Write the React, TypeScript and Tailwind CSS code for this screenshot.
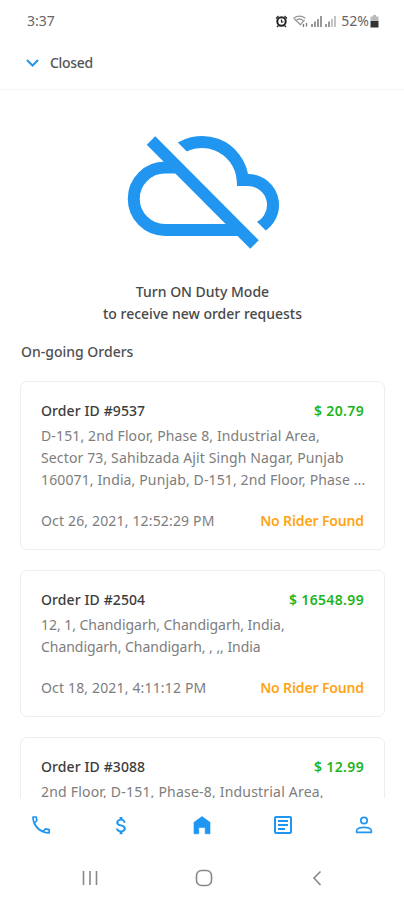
import { MdAttachMoney, MdOutlineArticle } from "react-icons/md";

type Order = {
	id: string;
	price: string;
	address: string[];
	addressClass: string;
	date?: string;
	status?: string;
};

const orders: Order[] = [
	{
		id: "9537",
		price: "$ 20.79",
		address: [
			"D-151, 2nd Floor, Phase 8, Industrial Area,",
			"Sector 73, Sahibzada Ajit Singh Nagar, Punjab",
			"160071, India, Punjab, D-151, 2nd Floor, Phase ..."
		],
		addressClass: "tracking-[0.13px]",
		date: "Oct 26, 2021, 12:52:29 PM",
		status: "No Rider Found"
	},
	{
		id: "2504",
		price: "$ 16548.99",
		address: [
			"12, 1, Chandigarh, Chandigarh, India,",
			"Chandigarh, Chandigarh, , ,, India"
		],
		addressClass: "tracking-[-0.04px]",
		date: "Oct 18, 2021, 4:11:12 PM",
		status: "No Rider Found"
	},
	{
		id: "3088",
		price: "$ 12.99",
		address: ["2nd Floor, D-151, Phase-8, Industrial Area,"],
		addressClass: "tracking-[0.2px]"
	}
];

const StatusBar = () => (
	<div className="flex h-[42px] shrink-0 items-center justify-between pl-[27px] pr-[25px] text-[14px] text-[#666]">
		<span>3:37</span>
		<div className="flex items-center">
			<svg className="mr-[5px]" width="13" height="13" viewBox="0 0 13 13" fill="none" stroke="#222">
				<circle cx="6.5" cy="6.5" r="4.2" strokeWidth="2" />
				<path d="M1 3.5 3.5 1M12 3.5 9.5 1M2 12l1.5-1.5M11 12l-1.5-1.5M6.5 4.5v2.5h2" strokeWidth="1.2" />
			</svg>
			<svg className="mr-[3px]" width="15" height="13" viewBox="0 0 15 13" fill="none" stroke="#999" strokeWidth="1.3">
				<path d="M.7 3.3C4 .3 9 .3 12.3 3.3M3 5.5c2-1.7 5-1.7 7 0M.7 3.3 7.5 9.8l4-5" />
				<path d="M10.5 12V9M13.5 8v3.5" stroke="#777" />
			</svg>
			<svg className="mr-[5px]" width="25" height="12" viewBox="0 0 25 12" fill="#999">
				<path d="M0 9h2v3H0zM3 6.500h2V12H3zM6 4h2v8H6zM9 1h2v11H9z" />
				<path d="M14 9h2v3h-2zM17 6.500h2V12h-2z" />
				<path d="M20 4h2v8h-2zM23 1h2v11h-2z" fill="#c4c4c4" />
			</svg>
			<span>52%</span>
			<svg className="ml-px" width="9" height="13" viewBox="0 0 9 13">
				<path d="M3 0h3v1.5h2.5V6H.5V1.5H3z" fill="#bbb" />
				<path d="M.5 6h8v6.5h-8z" fill="#333" />
			</svg>
		</div>
	</div>
);

const CloudOff = () => (
	<svg
		width="156"
		height="118"
		viewBox="125 133 156 118"
		fill="none"
		stroke="#2196f0"
		strokeWidth="12"
	>
		<clipPath id="cloud-right">
			<path d="M160 124.7H290V254.7Z" />
		</clipPath>
		<path d="M179 167.5H165A31.25 31.25 0 0 0 165 230H241" />
		<path
			clipPath="url(#cloud-right)"
			d="M173 154.200A40.700 40.700 0 0 1 242.700 180H247.500A25 25 0 0 1 255 229"
		/>
		<path d="M151 140.5 254.5 244.5" />
	</svg>
);

const OrderCard = ({ order }: { order: Order }) => (
	<div className="rounded-[7px] border border-[#eee] px-5 pt-[18px] pb-[17px]">
		<div className="flex h-[22px] items-center justify-between font-medium">
			<span className="tracking-[0.1px] text-[#3c3c3c]">Order ID #{order.id}</span>
			<span className="font-semibold tracking-[0.35px] text-[#1db51d]">{order.price}</span>
		</div>
		<div className={`mt-[3px] text-[#7d7d7d] ${order.addressClass}`}>
			{order.address.map((line) => (
				<p key={line} className="whitespace-nowrap">{line}</p>
			))}
		</div>
		{order.date && (
			<div className="mt-[19px] flex h-[22px] items-center justify-between">
				<span className="tracking-[0.16px] text-[#7d7d7d]">{order.date}</span>
				<span className="font-semibold tracking-[-0.14px] text-[#ffa416]">{order.status}</span>
			</div>
		)}
	</div>
);

const TabBar = () => (
	<div className="flex h-[54px] shrink-0 items-center justify-between pl-[30px] pr-[29px] text-[#1e96f2]">
		<svg width="22" height="22" viewBox="0 0 22 22" fill="none" stroke="currentColor" strokeWidth="1.7" strokeLinejoin="round">
			<path d="M3 3H6.200L6.900 6.500 4.300 9C6 12.500 9.500 16 13.300 17.400L15.200 14.900 19.200 15.600V18.800C10 18.800 3 12 3 3Z" />
		</svg>
		<MdAttachMoney size={23} />
		<svg width="22" height="22" viewBox="0 0 22 22" fill="currentColor">
			<path d="M11 2.500 19 8.300V19.800H14.200V13.500H7.800V19.800H3V8.300Z" stroke="currentColor" strokeWidth=".6" strokeLinejoin="round" />
		</svg>
		<MdOutlineArticle size={24} />
		<svg width="22" height="22" viewBox="0 0 22 22" fill="none" stroke="currentColor" strokeWidth="1.7" strokeLinejoin="round">
			<circle cx="11" cy="6.5" r="3.2" />
			<path d="M3.600 18.300V17C3.600 14.300 8 13.300 11 13.300S18.400 14.300 18.400 17V18.300Z" />
		</svg>
	</div>
);

const SystemNav = () => (
	<div className="flex h-[48px] shrink-0 items-center justify-between pt-[3px] pr-[78px] pl-[81px]">
		<svg width="18" height="18" viewBox="0 0 18 18" fill="none" stroke="#888" strokeWidth="1.6">
			<path d="M2.500 2v14M9 2v14M15.500 2v14" />
		</svg>
		<svg width="18" height="18" viewBox="0 0 18 18" fill="none" stroke="#888" strokeWidth="1.6">
			<rect x="1.5" y="1.5" width="15" height="15" rx="5" />
		</svg>
		<svg width="18" height="18" viewBox="0 0 18 18" fill="none" stroke="#888" strokeWidth="1.6">
			<path d="M12.500 2.500 6 9l6.500 7" />
		</svg>
	</div>
);

export default function App() {
	return (
		<div className="flex h-[900px] w-[404px] flex-col overflow-hidden bg-white font-['Noto_Sans',sans-serif] text-[14px] leading-[22px]">
			<StatusBar />
			<header className="flex h-[48px] shrink-0 items-center border-b border-[#f6f6f6] pb-[5px] pl-[26px] font-medium tracking-[-0.3px] text-[#555]">
				<svg className="mr-[11px]" width="13" height="8" viewBox="0 0 13 8" fill="none" stroke="#2196f0" strokeWidth="2">
					<path d="M1 1l5.500 5.500L12 1" />
				</svg>
				Closed
			</header>
			<main className="min-h-0 flex-1 overflow-hidden">
				<div className="flex justify-center pt-[43px] pl-px">
					<CloudOff />
				</div>
				<div className="mt-[30px] pl-px text-center font-medium text-[#484848]">
					<p>Turn ON Duty Mode</p>
					<p>to receive new order requests</p>
				</div>
				<h2 className="mt-4 pl-[21px] font-medium text-[#505050]">On-going Orders</h2>
				<div className="mt-[18px] flex flex-col gap-5 pr-[19px] pl-[20px]">
					{orders.map((order) => (
						<OrderCard key={order.id} order={order} />
					))}
				</div>
			</main>
			<TabBar />
			<SystemNav />
		</div>
	);
}
